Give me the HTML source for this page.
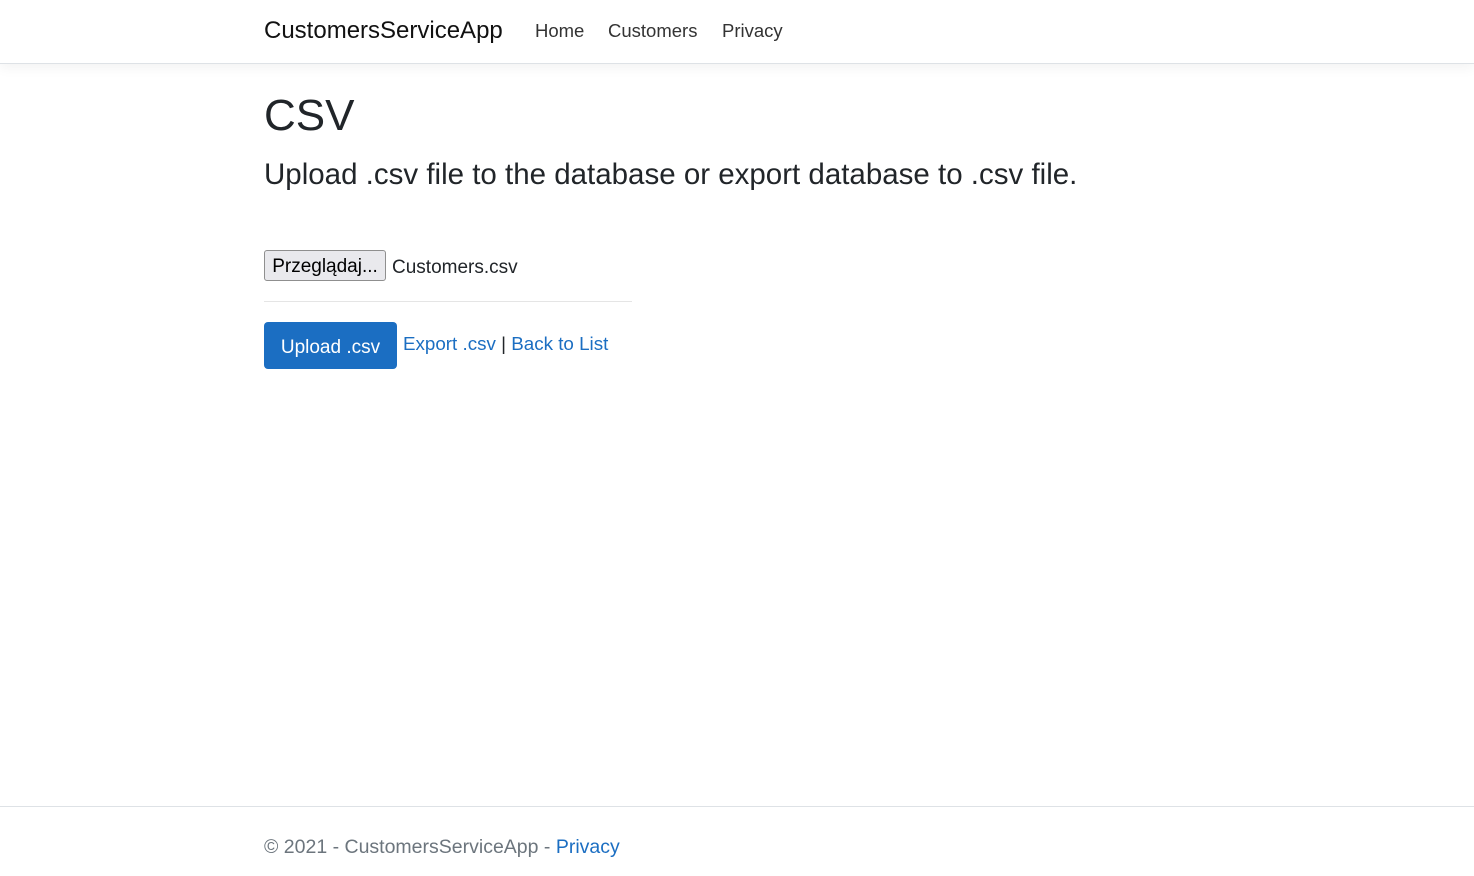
<!DOCTYPE html>
<html><head><meta charset="utf-8"><style>
body{margin:0;width:1474px;height:876px;position:relative;font-family:"Liberation Sans",sans-serif;color:#212529;background:#fff;overflow:hidden}
.nav{position:absolute;top:0;left:0;right:0;height:63px;border-bottom:1px solid #dee2e6;box-shadow:0 4px 12px rgba(0,0,0,.05)}
.a{position:absolute;white-space:nowrap}
.link{color:#1b6ec2}
</style></head><body>
<div class="nav"></div>
<div class="a" style="left:264px;top:17px;font-size:24px;color:#111">CustomersServiceApp</div>
<div class="a" style="left:535px;top:20px;font-size:18.5px;color:#333">Home</div>
<div class="a" style="left:608px;top:20px;font-size:18.5px;color:#333">Customers</div>
<div class="a" style="left:722px;top:20px;font-size:18.5px;color:#333">Privacy</div>
<div class="a" style="left:264px;top:91px;font-size:44px">CSV</div>
<div class="a" style="left:264px;top:158px;font-size:29.5px">Upload .csv file to the database or export database to .csv file.</div>
<div class="a" style="left:264px;top:250px;width:120px;height:29px;border:1px solid #8f8f8f;border-radius:3px;background:#e9e9ed;font-size:19px;line-height:31px;text-align:center;color:#000">Przeglądaj...</div>
<div class="a" style="left:392px;top:257px;font-size:19px">Customers.csv</div>
<div class="a" style="left:264px;top:301px;width:368px;height:1px;background:#e5e5e5"></div>
<div class="a" style="left:264px;top:322px;width:133px;height:47px;background:#1b6ec2;border-radius:4px;color:#fff;font-size:19px;line-height:51px;text-align:center">Upload .csv</div>
<div class="a" style="left:403px;top:333px;font-size:18.8px"><span class="link">Export .csv</span> | <span class="link">Back to List</span></div>
<div class="a" style="left:0;right:0;top:806px;height:1px;background:#dee2e6"></div>
<div class="a" style="left:264px;top:836px;font-size:19.5px;color:#6c757d">© 2021 - CustomersServiceApp - <span class="link">Privacy</span></div>
</body></html>
